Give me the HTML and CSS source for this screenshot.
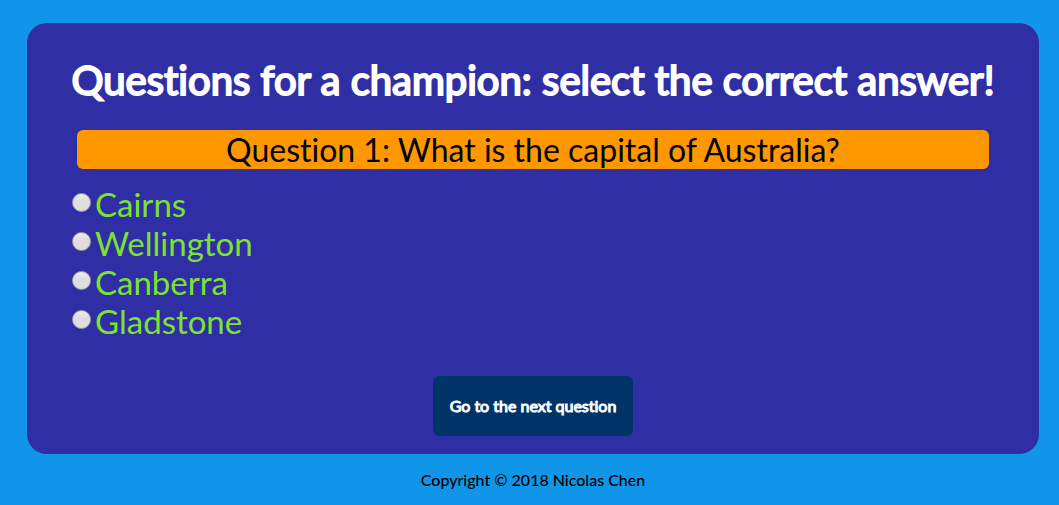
FILE: index.html
```html
<!DOCTYPE html>
<html lang="en">
<head>
<meta charset="utf-8">
<title>Questions for a champion</title>
<link rel="stylesheet" href="styles.css">
</head>
<body>
<main class="quiz">
<h1 class="title">Questions for a champion: select the correct answer!</h1>
<form class="form">
<h2 class="question" id="question">Question 1: What is the capital of Australia?</h2>
<div class="answers" role="radiogroup" aria-labelledby="question">
<label class="answer"><input class="radio" type="radio" name="answer" value="1">Cairns</label>
<label class="answer"><input class="radio" type="radio" name="answer" value="2">Wellington</label>
<label class="answer"><input class="radio" type="radio" name="answer" value="3">Canberra</label>
<label class="answer"><input class="radio" type="radio" name="answer" value="4">Gladstone</label>
</div>
<button class="next" type="button">Go to the next question</button>
</form>
</main>
<footer class="footer">Copyright © 2018 Nicolas Chen</footer>
</body>
</html>
```

FILE: styles.css
```css
* {
  box-sizing: border-box;
}

body {
  margin: 0;
  padding: 23px 20px 0 27px;
  background: #1095e8;
  font-family: Lato, sans-serif;
  font-variant-ligatures: none;
}

.quiz {
  padding: 32px 20px 18px;
  border-radius: 20px;
  background: #302ea4;
}

.title {
  margin: 0 0 25px;
  color: #fff;
  font-size: 40px;
  font-weight: 400;
  line-height: 50px;
  text-align: center;
  -webkit-text-stroke: 2px #fff;
}

.form {
  display: flex;
  flex-direction: column;
  padding: 0 25px;
}

.question {
  margin: 0 5px 16px;
  border-radius: 6px;
  background: #ff9800;
  color: #000;
  font-size: 32px;
  font-weight: 400;
  line-height: 39px;
  text-align: center;
}

.answers {
  display: flex;
  flex-direction: column;
  align-items: flex-start;
}

.answer {
  display: flex;
  gap: 4px;
  color: #7be32f;
  font-size: 33px;
  line-height: 39px;
}

.radio {
  appearance: none;
  width: 19px;
  height: 19px;
  margin: 8px 0 0;
  border: 1px solid #a5a5ad;
  border-radius: 50%;
  background: linear-gradient(#ededed, #dedede 40%);
}

.radio:checked {
  border: 6px solid #555;
}

.next {
  align-self: center;
  width: 200px;
  height: 60px;
  margin-top: 35px;
  padding: 0 0 2px;
  border: 0;
  border-radius: 6px;
  background: #003469;
  color: #fff;
  font: 400 16px Lato, sans-serif;
  font-variant-ligatures: none;
  -webkit-text-stroke: 1px #fff;
}

.footer {
  padding: 16px 0;
  color: #000;
  font-size: 16px;
  font-weight: 500;
  line-height: 20px;
  text-align: center;
}
```
